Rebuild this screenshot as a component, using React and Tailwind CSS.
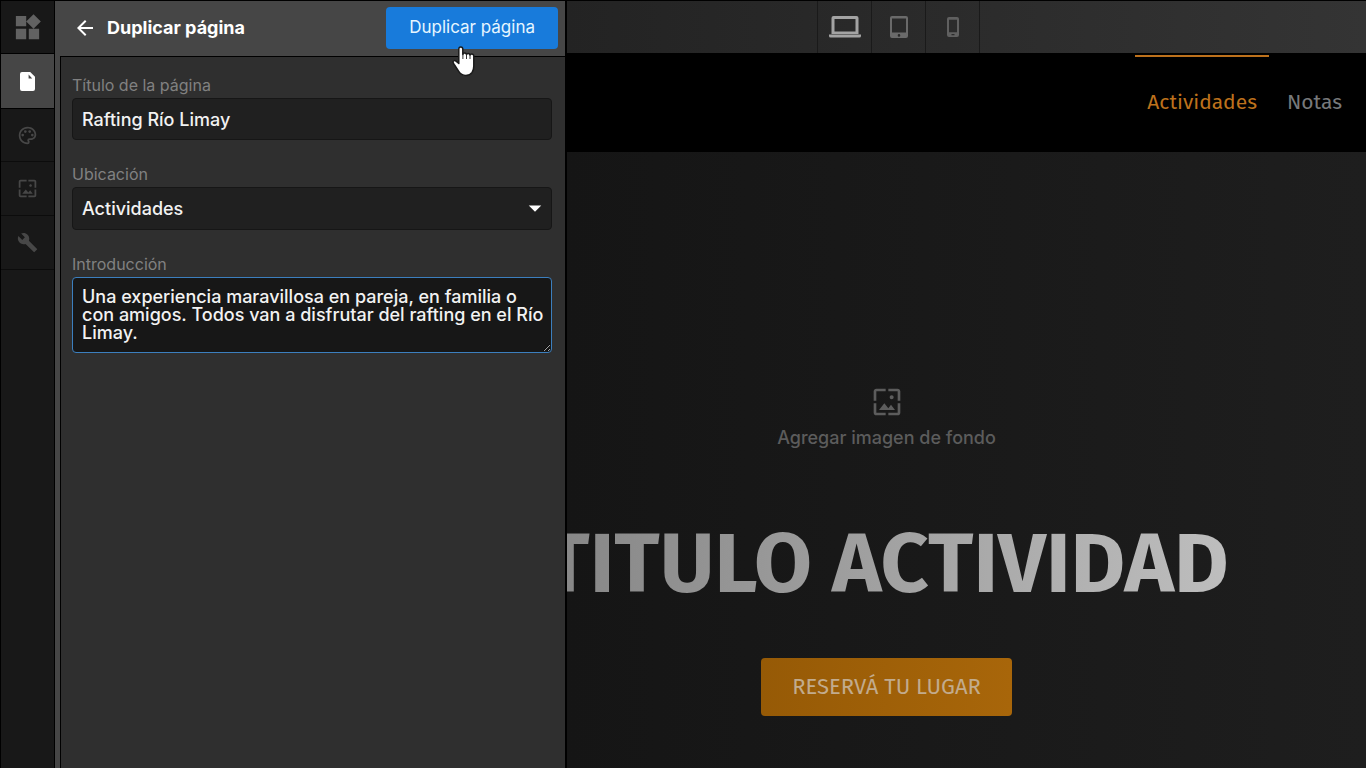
import { MdWidgets, MdOutlinePalette, MdWallpaper, MdBuild, MdArrowBack, MdArrowDropDown } from "react-icons/md";

function FileIcon() {
  return (
    <svg width="15" height="19" viewBox="0 0 15 19" aria-hidden="true">
      <path
        fillRule="evenodd"
        fill="currentColor"
        d="M2 0h8.2L15 4.8V17a2 2 0 0 1-2 2H2a2 2 0 0 1-2-2V2a2 2 0 0 1 2-2zm6.600 2.600v4h3.600z"
      />
    </svg>
  );
}

function LaptopIcon() {
  return (
    <svg width="32" height="22" viewBox="0 0 32 22" aria-hidden="true">
      <path fillRule="evenodd" fill="currentColor" d="M4.500 0h23a2 2 0 0 1 2 2v16h-27V2a2 2 0 0 1 2-2zm1 3v12.500h21V3z" />
      <path fill="currentColor" d="M0 18.500h32v1.500a1.500 1.500 0 0 1-1.500 1.500h-29a1.500 1.500 0 0 1-1.500-1.500z" />
    </svg>
  );
}

function TabletIcon() {
  return (
    <svg width="18" height="22" viewBox="0 0 18 22" aria-hidden="true">
      <path
        fillRule="evenodd"
        fill="currentColor"
        d="M2 0h14a2 2 0 0 1 2 2v18a2 2 0 0 1-2 2H2a2 2 0 0 1-2-2V2a2 2 0 0 1 2-2zm0 2.500v14h14v-14zM9 18.100a1.300 1.300 0 1 0 0 2.600 1.300 1.300 0 0 0 0-2.600z"
      />
    </svg>
  );
}

function PhoneIcon() {
  return (
    <svg width="12" height="20" viewBox="0 0 12 20" aria-hidden="true">
      <path
        fillRule="evenodd"
        fill="currentColor"
        d="M2 0h8a2 2 0 0 1 2 2v16a2 2 0 0 1-2 2H2a2 2 0 0 1-2-2V2a2 2 0 0 1 2-2zm0 2.800v12.400h8V2.800zM4.500 17v1.200h3V17z"
      />
    </svg>
  );
}

function HandPointer() {
  return (
    <svg width="24" height="32" viewBox="0 0 24 32" aria-hidden="true">
      <path
        fill="#fff"
        stroke="#1a1a1a"
        strokeWidth="1.500"
        strokeLinejoin="round"
        d="M6.800 3.200c0-1.300.8-2.200 2-2.200s2 .9 2 2.200V8.500c.2-1 1-1.600 1.900-1.600 1 0 1.700.7 1.800 1.700.3-.8.9-1.200 1.700-1.200 1 0 1.700.7 1.800 1.800.3-.7.9-1.100 1.600-1.100 1.300 0 2.200.9 2.200 2.200V20c0 3-.6 4.600-1.700 6.400-1.300 2-3 3-6.200 3-3.300 0-5.300-1-7-3.700L2.200 18.500c-.9-1.500-1.400-2.200-1.100-3 .4-1 1.900-1.200 2.900-.4l2.800 2.300z"
      />
      <path stroke="#333" strokeWidth="1" d="M10.900 8v5M14.500 8.500v4.500M18 9.500v3.500" />
    </svg>
  );
}

const tools = [
  { label: "Componentes", icon: <MdWidgets size={31} />, tone: "text-[#626262] border-black h-[53px]" },
  { label: "Páginas", icon: <FileIcon />, tone: "text-white bg-[#464646] border-black h-[55px]" },
  { label: "Estilos", icon: <MdOutlinePalette size={21} />, tone: "text-[#474747] border-[#0c0c0c] h-[53px]" },
  { label: "Imágenes", icon: <MdWallpaper size={21} />, tone: "text-[#474747] border-[#0c0c0c] h-[54px]" },
  { label: "Herramientas", icon: <MdBuild size={21} />, tone: "text-[#474747] border-[#0c0c0c] h-[54px]" },
];

const devices = [
  { label: "Escritorio", icon: <LaptopIcon />, tone: "text-[#a3a3a3]" },
  { label: "Tableta", icon: <TabletIcon />, tone: "text-[#6a6a6a]" },
  { label: "Teléfono", icon: <PhoneIcon />, tone: "text-[#606060]" },
];

const fieldClass =
  "block w-full rounded-sm border border-[#161616] bg-[#202020] px-[9px] text-lg font-medium text-[#f2f2f2] outline-none";

function Field({ id, label, children }) {
  return (
    <div className="flex flex-col gap-[3px]">
      <label htmlFor={id} className="text-base leading-5 text-[#818181]">
        {label}
      </label>
      {children}
    </div>
  );
}

export default function App() {
  return (
    <div className="flex min-h-screen border-t border-black bg-black font-['Inter',sans-serif]">
      <nav aria-label="Herramientas del editor" className="flex w-[55px] shrink-0 flex-col border-x border-black bg-[#181818]">
        {tools.map((t) => (
          <button
            key={t.label}
            type="button"
            aria-label={t.label}
            className={`flex items-center justify-center border-b ${t.tone}`}
          >
            {t.icon}
          </button>
        ))}
      </nav>

      <aside className="relative z-10 flex w-[512px] shrink-0 flex-col border-r-2 border-black bg-[#464646]">
        <header className="flex h-[55px] items-center gap-2.5 pr-[7px] pb-0.5 pl-[18px]">
          <button type="button" aria-label="Volver" className="text-white">
            <MdArrowBack size={24} />
          </button>
          <h1 className="text-lg font-bold text-white">Duplicar página</h1>
          <div className="relative ml-auto">
            <button type="button" className="h-[42px] rounded-sm bg-[#187bdb] px-[23px] text-[17px] text-[#e6f6ff]">
              Duplicar página
            </button>
            <div className="pointer-events-none absolute top-[39px] left-[66px]">
              <HandPointer />
            </div>
          </div>
        </header>

        <form
          className="ml-[5px] flex grow flex-col gap-6 border-t border-l border-black bg-[#2f2f2f] pt-[18px] pr-[13px] pl-[11px]"
          onSubmit={(e) => e.preventDefault()}
        >
          <Field id="titulo" label="Título de la página">
            <input id="titulo" type="text" defaultValue="Rafting Río Limay" className={`${fieldClass} h-[42px]`} />
          </Field>
          <Field id="ubicacion" label="Ubicación">
            <div className="relative">
              <select id="ubicacion" className={`${fieldClass} h-[43px] appearance-none`}>
                <option>Actividades</option>
              </select>
              <MdArrowDropDown size={30} className="pointer-events-none absolute top-1.5 right-0.5 text-white" />
            </div>
          </Field>
          <Field id="introduccion" label="Introducción">
            <textarea
              id="introduccion"
              rows={3}
              defaultValue="Una experiencia maravillosa en pareja, en familia o con amigos. Todos van a disfrutar del rafting en el Río Limay."
              className="block w-full resize-y rounded-sm border border-[#3c7fbe] bg-[#171717] py-2.5 pr-1 pl-[9px] text-lg leading-[18px] font-medium text-[#f2f2f2] outline-none"
            />
          </Field>
        </form>
      </aside>

      <main className="flex min-w-0 grow flex-col overflow-hidden">
        <div className="flex h-[52px] justify-center bg-linear-to-r from-[#232323] to-[#343434]">
          <div className="-ml-[136px] flex border-l border-[#1a1a1a]">
            {devices.map((d) => (
              <button
                key={d.label}
                type="button"
                aria-label={d.label}
                className={`flex w-[54px] items-center justify-center border-r border-[#1a1a1a] ${d.tone}`}
              >
                {d.icon}
              </button>
            ))}
          </div>
        </div>

        <nav aria-label="Sitio" className="flex h-[99px] justify-end pt-0.5 pr-3 font-['Fira_Sans','Noto_Sans',sans-serif] text-[21px]">
          <a href="#actividades" className="flex items-center border-t-2 border-[#bd711c] px-3 pb-1 text-[#bd711c]">
            Actividades
          </a>
          <a href="#notas" className="ml-1.5 flex items-center border-t-2 border-transparent px-3 pb-1 text-[#77797b]">
            Notas
          </a>
        </nav>

        <section className="flex grow bg-linear-to-r from-[#151515] to-[#1e1e1e]">
          <div className="-ml-40 flex grow flex-col items-center">
            <button type="button" className="mt-[234px] flex flex-col items-center gap-1.5 text-[#5c5c5c]">
              <MdWallpaper size={32} />
              <span className="text-lg leading-7 font-medium">Agregar imagen de fondo</span>
            </button>
            <h2 className="mt-16 bg-linear-to-r from-[#868686] to-[#bebebe] bg-clip-text font-['Fira_Sans','Roboto',sans-serif] text-[84px] leading-[96px] font-bold whitespace-nowrap text-transparent">
              TITULO ACTIVIDAD
            </h2>
            <a
              href="#reserva"
              className="mt-[46px] flex h-[58px] items-center rounded bg-linear-to-r from-[#965a06] to-[#a8660a] px-[31px] pb-0.5 font-['Fira_Sans','Noto_Sans',sans-serif] text-[22px] text-[#c2ab8d]"
            >
              RESERVÁ TU LUGAR
            </a>
          </div>
        </section>
      </main>
    </div>
  );
}
